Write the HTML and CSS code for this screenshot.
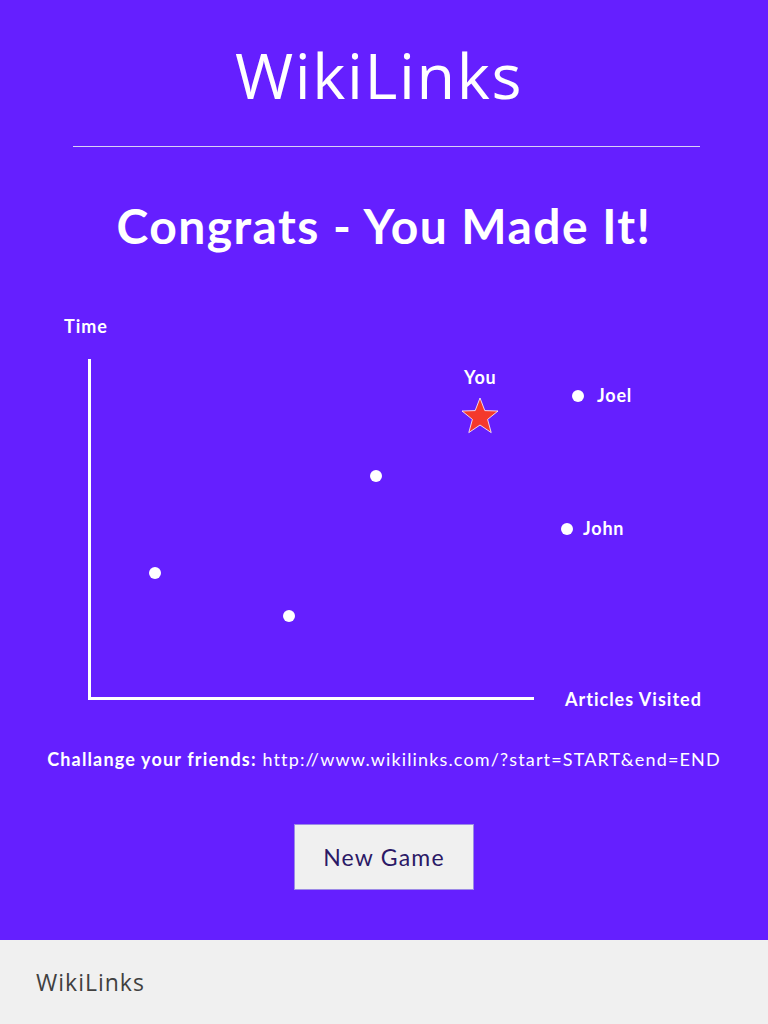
FILE: index.html
```html
<!DOCTYPE html>
<html>
<head>
<meta charset="utf-8">
<link rel="stylesheet" href="styles.css">
</head>
<body>
<main class="main">
  <h1 class="brand">WikiLinks</h1>
  <hr class="rule">
  <h2 class="congrats">Congrats - You Made It!</h2>
  <div class="chart">
    <span class="axis-label time">Time</span>
    <div class="y-axis"></div>
    <div class="x-axis"></div>
    <span class="axis-label visited">Articles Visited</span>
    <span class="dot" style="left:155px;top:272px"></span>
    <span class="dot" style="left:289px;top:315px"></span>
    <span class="dot" style="left:376px;top:175px"></span>
    <span class="dot" style="left:567px;top:228px"></span>
    <span class="dot" style="left:578px;top:95px"></span>
    <span class="name" style="left:583px;top:227px">John</span>
    <span class="name" style="left:597px;top:94px">Joel</span>
    <span class="name" style="left:464px;top:76px">You</span>
    <svg class="star" width="40" height="40" viewBox="0 0 40 40">
      <polygon points="20,2 24.8,14.6 38,15 27.6,23.4 31.2,36.6 20,29 8.8,36.6 12.4,23.4 2,15 15.2,14.6" fill="#f4392c" stroke="#ffffff" stroke-width="0.8" stroke-linejoin="round"/>
    </svg>
  </div>
  <p class="challenge"><b>Challange your friends:</b> http://www.wikilinks.com/?start=START&amp;end=END</p>
  <button class="new-game">New Game</button>
</main>
<footer class="footer">WikiLinks</footer>
</body>
</html>
```

FILE: styles.css
```css
* { box-sizing: border-box; }
html, body { margin: 0; padding: 0; }
body {
  font-family: Lato, "Open Sans", sans-serif;
  background: #651fff;
  color: #ffffff;
}
.main {
  height: 940px;
  display: flex;
  flex-direction: column;
  align-items: center;
  padding-top: 35px;
}
.brand {
  margin: 0 10px 0 0;
  font-family: "Open Sans", Lato, sans-serif;
  font-weight: 400;
  font-size: 63px;
  line-height: 80px;
  height: 80px;
  letter-spacing: 1.6px;
}
.rule {
  align-self: flex-start;
  margin: 31px 0 0 73px;
  width: 627px;
  border: 0;
  height: 1px;
  background: #d9d2f5;
}
.congrats {
  margin: 49px 0 0;
  font-size: 48px;
  line-height: 60px;
  font-weight: 700;
  letter-spacing: 1.45px;
}
.chart {
  position: relative;
  align-self: stretch;
  height: 420px;
  margin-top: 45px;
}
.axis-label {
  position: absolute;
  font-weight: 700;
  font-size: 18px;
  line-height: 22px;
  letter-spacing: 1px;
}
.time { left: 64px; top: 14px; }
.visited { left: 565px; top: 387px; }
.y-axis {
  position: absolute;
  left: 88px;
  top: 58px;
  width: 3px;
  height: 341px;
  background: #fff;
}
.x-axis {
  position: absolute;
  left: 88px;
  top: 396px;
  width: 446px;
  height: 3px;
  background: #fff;
}
.dot {
  position: absolute;
  width: 12px;
  height: 12px;
  margin: -6px 0 0 -6px;
  border-radius: 50%;
  background: #fff;
}
.name {
  position: absolute;
  font-weight: 700;
  font-size: 18px;
  line-height: 22px;
  margin-top: -11px;
  letter-spacing: 0.8px;
}
.star { position: absolute; left: 460px; top: 95px; }
.challenge {
  margin: 27px 0 0;
  font-size: 18px;
  line-height: 22px;
  font-weight: 400;
  letter-spacing: 1.15px;
}
.challenge b { font-weight: 700; }
.new-game {
  margin-top: 54px;
  width: 180px;
  height: 66px;
  background: #f0f0f0;
  border: 1px solid #9c8ae6;
  font-family: Lato, sans-serif;
  font-size: 23px;
  letter-spacing: 1.2px;
  color: #2b1966;
  padding: 0;
}
.footer {
  height: 84px;
  background: #f0f0f0;
  color: #404040;
  font-family: "Open Sans", sans-serif;
  font-size: 23px;
  letter-spacing: 1px;
  line-height: 84px;
  padding-left: 36px;
}
```
